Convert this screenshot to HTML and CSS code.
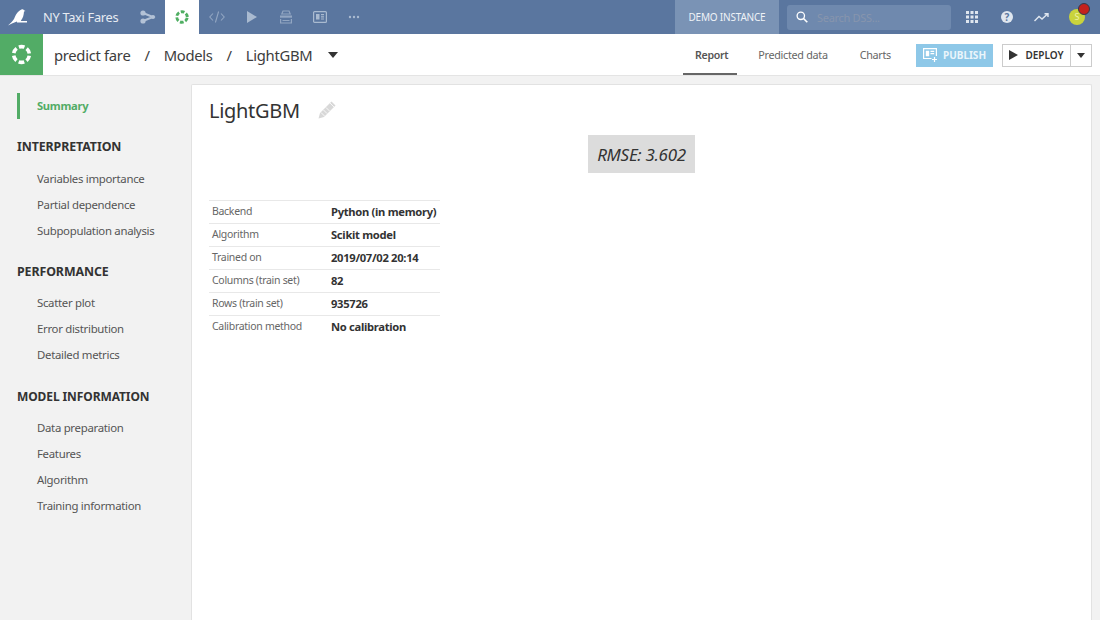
FILE: index.html
```html
<!DOCTYPE html>
<html lang="en">
<head>
<meta charset="utf-8">
<title>LightGBM</title>
<link rel="stylesheet" href="styles.css">
</head>
<body>
<header class="topbar">
  <svg class="bird" width="20" height="17" viewBox="0 0 20 17"><path d="M0 16.500 C2 14.500 4.500 12.500 6 10 C7.500 6.500 9.500 2 13.500 0.500 C14.500 0 15.500 0.300 16 1.200 L17.500 2 L16 2.500 C15.800 6 15 9 13 11.500 L13 12 L19 12 L19 13.500 L9 13.500 L9 12.500 C6 13.500 3 15 0 16.500Z" fill="#fff"/></svg>
  <span class="project">NY Taxi Fares</span>
  <svg class="nav-icon flow" width="16" height="14" viewBox="0 0 16 14"><path d="M3 3 L13 7 L3 11" fill="none" stroke="#b3c2d6" stroke-width="2"/><circle cx="3" cy="3" r="2.600" fill="#b3c2d6"/><circle cx="3" cy="11" r="2.600" fill="#b3c2d6"/><circle cx="13" cy="7" r="2" fill="#b3c2d6"/></svg>
  <div class="nav-active"><svg class="ring-green" width="14" height="14" viewBox="0 0 20 20"><circle cx="10" cy="10" r="7.500" fill="none" stroke="#4fae62" stroke-width="4" stroke-dasharray="5.400 2.450" stroke-dashoffset="-1.200"/></svg></div>
  <div class="nav-icons">
    <svg width="16" height="12" viewBox="0 0 16 12"><path d="M4 2.500 L0.800 6 L4 9.500 M12 2.500 L15.200 6 L12 9.500 M9.600 0.500 L6.400 11.500" fill="none" stroke="#92a6c2" stroke-width="1.100"/></svg>
    <svg width="12" height="12" viewBox="0 0 12 12"><path d="M1 0 L11 6 L1 12Z" fill="#a9bad0"/></svg>
    <svg width="14" height="14" viewBox="0 0 14 14"><path d="M4 1H10L11.200 4H2.800Z" fill="none" stroke="#92a6c2" stroke-width="1.200"/><rect x="1" y="5.500" width="12" height="2.200" fill="#92a6c2"/><path d="M1.600 9V13H12.400V9M3.500 10.500H10.500" fill="none" stroke="#92a6c2" stroke-width="1.200"/></svg>
    <svg width="14" height="12" viewBox="0 0 14 12"><rect x="0.600" y="0.600" width="12.800" height="10.800" rx="1" fill="none" stroke="#a9bad0" stroke-width="1.200"/><path d="M3 3H6.500V8.500H3Z M8 3H11V4.300H8Z M8 5.300H11V6.500H8Z M8 7.400H11V8.500H8Z" fill="#a9bad0"/></svg>
    <svg width="12" height="4" viewBox="0 0 12 4"><circle cx="2" cy="2" r="1.200" fill="#a9bad0"/><circle cx="6" cy="2" r="1.200" fill="#a9bad0"/><circle cx="10" cy="2" r="1.200" fill="#a9bad0"/></svg>
  </div>
  <div class="demo">DEMO INSTANCE</div>
  <div class="search">
    <svg width="12" height="12" viewBox="0 0 12 12"><circle cx="4.800" cy="4.800" r="3.700" fill="none" stroke="#fff" stroke-width="1.300"/><path d="M7.500 7.500 L11.300 11.300" stroke="#fff" stroke-width="1.600"/></svg>
    <span>Search DSS...</span>
  </div>
  <div class="tools">
    <svg width="12" height="12" viewBox="0 0 12 12"><g fill="#dfe6ef"><rect width="3" height="3"/><rect x="4.500" width="3" height="3"/><rect x="9" width="3" height="3"/><rect y="4.500" width="3" height="3"/><rect x="4.500" y="4.500" width="3" height="3"/><rect x="9" y="4.500" width="3" height="3"/><rect y="9" width="3" height="3"/><rect x="4.500" y="9" width="3" height="3"/><rect x="9" y="9" width="3" height="3"/></g></svg>
    <span class="help">?</span>
    <svg class="trend" width="15" height="9" viewBox="0 0 15 9"><path d="M0.500 8 L5 3.500 L8 6 L13.500 1 M10.500 0.800H14V4" fill="none" stroke="#dfe6ef" stroke-width="1.400"/></svg>
    <div class="avatar">S<i class="alert"></i></div>
  </div>
</header>

<div class="subbar">
  <div class="model-tile"><svg width="21" height="21" viewBox="0 0 20 20"><circle cx="10" cy="10" r="7.500" fill="none" stroke="#fff" stroke-width="3.400" stroke-dasharray="5.400 2.450" stroke-dashoffset="-1.200"/></svg></div>
  <nav class="crumbs"><span>predict fare</span><span>/</span><span>Models</span><span>/</span><span>LightGBM</span><i class="caret"></i></nav>
  <div class="tabs">
    <a class="tab tab-on">Report</a>
    <a class="tab">Predicted data</a>
    <a class="tab">Charts</a>
  </div>
  <button class="publish"><svg width="14" height="14" viewBox="0 0 14 14"><path d="M8.500 10.500H.6V.6H13.400V8" fill="none" stroke="#fff" stroke-width="1.200"/><path d="M2.800 2.800H6.200V8.300H2.800Z M7.500 2.800H11.200V4H7.500Z M7.500 5H11.200V6.200H7.500Z" fill="#fff"/><path d="M11.500 9V14 M9 11.500H14" stroke="#fff" stroke-width="1.200"/></svg>PUBLISH</button>
  <div class="deploy">
    <button class="deploy-main"><svg width="9" height="10" viewBox="0 0 9 10"><path d="M0 0L9 5L0 10Z" fill="#333"/></svg>DEPLOY</button>
    <button class="deploy-more"><i class="caret small"></i></button>
  </div>
</div>

<div class="main">
  <aside class="side">
    <a class="summary">Summary</a>
    <h3>INTERPRETATION</h3>
    <ul class="first-list">
      <li>Variables importance</li>
      <li>Partial dependence</li>
      <li>Subpopulation analysis</li>
    </ul>
    <h3>PERFORMANCE</h3>
    <ul>
      <li>Scatter plot</li>
      <li>Error distribution</li>
      <li>Detailed metrics</li>
    </ul>
    <h3 class="info-head">MODEL INFORMATION</h3>
    <ul>
      <li>Data preparation</li>
      <li>Features</li>
      <li>Algorithm</li>
      <li>Training information</li>
    </ul>
  </aside>
  <section class="card">
    <div class="title-row">
      <h1>LightGBM</h1>
      <svg width="20" height="20" viewBox="0 0 20 20"><path d="M1.500 18.500 L3 13 L14.500 1.500 L18.500 5.500 L7 17Z" fill="#d8d8d8"/><path d="M4 12.500L8 16.500M6.500 10L10 13.500M9 7.500L12.500 11M13 3L17 7" stroke="#fff" stroke-width=".8"/></svg>
    </div>
    <div class="metric-wrap"><div class="metric">RMSE: 3.602</div></div>
    <table class="facts">
      <tr><td>Backend</td><th>Python (in memory)</th></tr>
      <tr><td>Algorithm</td><th>Scikit model</th></tr>
      <tr><td>Trained on</td><th>2019/07/02 20:14</th></tr>
      <tr><td>Columns (train set)</td><th>82</th></tr>
      <tr><td>Rows (train set)</td><th>935726</th></tr>
      <tr><td>Calibration method</td><th>No calibration</th></tr>
    </table>
  </section>
</div>
</body>
</html>
```
FILE: styles.css
```css
* { box-sizing: border-box; }
html, body { margin: 0; height: 100%; overflow: hidden; }
body { width: 1100px; height: 620px; display: flex; flex-direction: column; background: #f2f2f2; color: #333; font-family: "Noto Sans", "Liberation Sans", sans-serif; letter-spacing: -0.3px; }
svg { display: block; flex: none; }

.topbar { height: 34px; flex: none; display: flex; align-items: center; background: #5a769f; color: #fff; }
.bird { margin-left: 8px; }
.project { margin-left: 15px; width: 80px; font-size: 12.800px; color: #e6ebf2; white-space: nowrap; }
.flow { margin-left: 17px; }
.nav-active { width: 34px; height: 34px; margin-left: 9px; background: #fff; display: flex; align-items: center; justify-content: center; }
.nav-icons { margin-left: 10px; width: 151px; display: flex; align-items: center; justify-content: space-between; }
.demo { margin-left: 315px; width: 104px; height: 34px; background: #7a93b5; font-size: 10px; color: #eef2f7; display: flex; align-items: center; justify-content: center; letter-spacing: -0.2px; white-space: nowrap; }
.search { margin-left: 8px; width: 164px; height: 25px; background: #6f89ae; border-radius: 3px; display: flex; align-items: center; gap: 9px; padding-left: 9px; font-size: 11px; color: #8795ad; white-space: nowrap; }
.tools { margin-left: 15px; display: flex; align-items: center; }
.help { margin-left: 23px; width: 12px; height: 12px; border-radius: 50%; background: #dfe6ef; color: #5a769f; font-size: 10px; font-weight: 700; line-height: 12px; text-align: center; letter-spacing: 0; }
.trend { margin-left: 21px; }
.avatar { position: relative; margin-left: 20px; width: 16px; height: 16px; border-radius: 50%; background: #c9d33c; color: #eef2a8; font-size: 9px; line-height: 16px; text-align: center; letter-spacing: 0; }
.alert { position: absolute; top: -6px; left: 9px; width: 12px; height: 12px; border-radius: 50%; background: #c4211d; border: 1.500px solid #33394a; }

.subbar { height: 42px; flex: none; display: flex; align-items: center; background: #fff; border-bottom: 1px solid #e4e4e4; }
.model-tile { width: 43px; height: 41px; background: #52ac66; display: flex; align-items: center; justify-content: center; }
.crumbs { margin-left: 11px; width: 624px; display: flex; align-items: center; gap: 14px; font-size: 14.800px; color: #3d3d3d; white-space: nowrap; }
.caret { width: 0; height: 0; border-left: 5px solid transparent; border-right: 5px solid transparent; border-top: 6px solid #333; margin-left: 2px; }
.caret.small { margin: 0; border-left-width: 4px; border-right-width: 4px; border-top-width: 5px; display: block; }
.tabs { display: flex; height: 41px; width: 233px; margin-left: 5px; font-size: 10.800px; }
.tab { display: flex; align-items: center; padding: 0 11px; color: #666; white-space: nowrap; margin-right: 10px; }
.tab-on { font-size: 10.600px; font-weight: 600; color: #555; padding: 2px 9px 0 12px; border-bottom: 2px solid #666; }
.publish { width: 77px; height: 23px; margin-top: 1px; border: 0; background: #8ec8e8; color: #eaf5fb; font: 700 10px "Noto Sans", sans-serif; display: flex; align-items: center; justify-content: center; gap: 6px; padding: 0; }
.deploy { margin-left: 9px; margin-top: 1px; display: flex; height: 23px; border: 1px solid #ccc; background: #fff; }
.deploy-main { width: 68px; border: 0; background: none; font: 600 10px "Noto Sans", sans-serif; color: #333; display: flex; align-items: center; justify-content: center; gap: 7px; padding: 0; border-right: 1px solid #ccc; }
.deploy-more { width: 20px; border: 0; background: none; padding: 0; display: flex; align-items: center; justify-content: center; }

.main { flex: 1; display: flex; min-height: 0; }
.side { width: 191px; flex: none; padding-left: 17px; padding-top: 17px; }
.summary { display: flex; align-items: center; height: 26px; padding-bottom: 2px; border-left: 3px solid #52ac66; padding-left: 17px; font-size: 11.200px; font-weight: 700; color: #52ac66; }
.side h3 { margin: 17px 0 0; height: 22px; font-size: 12.400px; font-weight: 700; color: #333; line-height: 22px; white-space: nowrap; letter-spacing: -0.1px; }
.side .info-head { font-size: 12px; margin-top: 18px; }
.side ul { list-style: none; margin: 7px 0 0; padding: 0 0 0 20px; }
.side .first-list { margin-top: 8px; }
.side li { height: 26px; line-height: 26px; font-size: 11.400px; color: #555; white-space: nowrap; }

.card { width: 901px; flex: none; background: #fff; margin-top: 8px; padding: 11px 17px; border: 1px solid #e2e2e2; border-bottom: 0; border-radius: 2px 2px 0 0; }
.title-row { display: flex; align-items: center; gap: 17px; height: 28px; }
h1 { margin: 0; font-size: 20px; font-weight: 400; color: #333; }
.metric-wrap { display: flex; justify-content: center; margin-top: 11px; }
.metric { width: 107px; height: 38px; background: #dcdcdc; display: flex; align-items: center; justify-content: center; font-size: 17px; font-style: italic; color: #333; white-space: nowrap; }
.facts { margin-top: 27px; width: 231px; border-collapse: collapse; table-layout: fixed; }
.facts tr { height: 23px; border-top: 1px solid #e8e8e8; }
.facts td { width: 122px; padding: 0 0 2px 3px; font-size: 10.500px; color: #666; white-space: nowrap; }
.facts th { padding: 0 0 1px; text-align: left; font-size: 11.200px; font-weight: 700; color: #333; white-space: nowrap; }
```
